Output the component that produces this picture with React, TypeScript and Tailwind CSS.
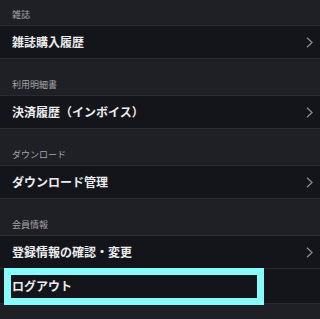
const sections = [
  { title: "雑誌", items: ["雑誌購入履歴"] },
  { title: "利用明細書", items: ["決済履歴（インボイス）"] },
  { title: "ダウンロード", items: ["ダウンロード管理"] },
  { title: "会員情報", items: ["登録情報の確認・変更"] },
];

function Chevron() {
  return (
    <svg width="7" height="11" viewBox="0 0 7 11" fill="none" className="shrink-0">
      <polyline points="1,0.8 6,5.5 1,10.2" stroke="#8b8c92" strokeWidth="1.3" />
    </svg>
  );
}

export default function App() {
  return (
    <div className="min-h-[319px] w-full bg-[#1f2025] font-['Noto_Sans_CJK_JP','Noto_Sans',sans-serif]">
      {sections.map((section, i) => (
        <section key={section.title} className={i > 0 ? "mt-[11px]" : ""}>
          <div className="h-[25px] pl-[12px] pt-[9px] text-[9px] leading-[11px] text-[#a3a4aa]">
            {section.title}
          </div>
          <ul className="border-t border-[#2b2c32]">
            {section.items.map((item) => (
              <li
                key={item}
                className="flex h-[33px] items-center justify-between border-b border-[#2b2c32] bg-[#13151b] pl-[12px] pr-[7px]"
              >
                <span className="text-[12px] font-bold leading-none text-[#ececee]">{item}</span>
                <Chevron />
              </li>
            ))}
            {i === sections.length - 1 && (
              <li className="relative flex h-[35px] items-center border-b border-[#2b2c32] bg-[#13151b] pl-[12px]">
                <span className="text-[12px] font-bold leading-none text-[#ececee]">ログアウト</span>
                <div className="pointer-events-none absolute left-[4px] top-[-1px] h-[37px] w-[260px] border-[7px] border-[#88fcfc]" />
              </li>
            )}
          </ul>
        </section>
      ))}
    </div>
  );
}
